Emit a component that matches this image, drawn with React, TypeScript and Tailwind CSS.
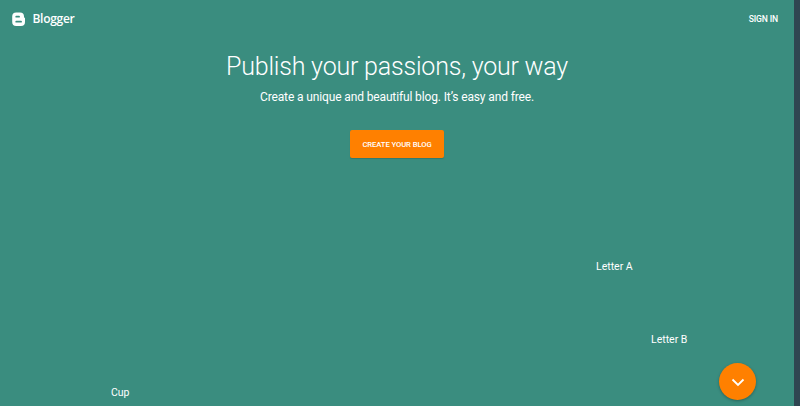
export default function App() {
  return (
    <div className="relative flex h-[406px] w-[800px] overflow-hidden bg-[#2f4551] font-['Roboto',sans-serif] text-white">
      <main className="relative w-[794px] bg-[#3a8d7f]">
        <header className="flex h-[38px] items-center justify-between pr-[16px] pl-[12px]">
          <div className="flex items-center gap-[7.500px]">
            <svg width="13" height="14" viewBox="0 0 13 14">
              <path fill="#fff" fillRule="evenodd" d="M4.200.5H8a4 4 0 0 1 4 4c0 .9.100 1.100.6 1.200.3.1.4.3.4.7V10a4 4 0 0 1-4 4H4.200a4 4 0 0 1-4-4V4.500a4 4 0 0 1 4-4ZM4.300 3.700a.95.95 0 0 0 0 1.900h2.700a.95.95 0 0 0 0-1.900ZM4.300 8.700a.95.95 0 0 0 0 1.900h4.700a.95.95 0 0 0 0-1.900Z" />
            </svg>
            <span className="font-['Open_Sans',sans-serif] text-[12px] leading-4 font-semibold tracking-[-0.300px]">Blogger</span>
          </div>
          <a className="text-[8.600px] leading-4 font-medium tracking-[-0.150px]">SIGN IN</a>
        </header>
        <section className="flex flex-col items-center">
          <h1 className="mt-[13px] text-[25px] leading-[32px] font-light tracking-[-0.200px] whitespace-nowrap">Publish your passions, your way</h1>
          <p className="mt-[6px] text-[12px] leading-4 tracking-[-0.130px] whitespace-nowrap">Create a unique and beautiful blog. It’s easy and free.</p>
          <button className="mt-[25px] h-[28px] w-[94px] rounded-[2px] bg-[#ff8000] pt-px text-[7.700px] font-medium tracking-[-0.100px] shadow-[0_1px_1px_rgba(0,0,0,0.15)]">CREATE YOUR BLOG</button>
        </section>
        <span className="absolute top-[259px] left-[596px] text-[10.500px] leading-4">Letter A</span>
        <span className="absolute top-[332px] left-[651px] text-[10.500px] leading-4">Letter B</span>
        <span className="absolute top-[385px] left-[111px] text-[10.500px] leading-4">Cup</span>
        <button className="absolute top-[363px] left-[719px] flex size-[37px] items-center justify-center rounded-full bg-[#ff8000] shadow-[0_1px_3px_rgba(0,0,0,0.3)]">
          <svg width="14" height="9" viewBox="0 0 14 9" className="mt-[2px]" fill="none" stroke="#fff" strokeWidth="1.800"><path d="m1.500 1.500 5.500 5.500 5.500-5.500" /></svg>
        </button>
      </main>
    </div>
  );
}
